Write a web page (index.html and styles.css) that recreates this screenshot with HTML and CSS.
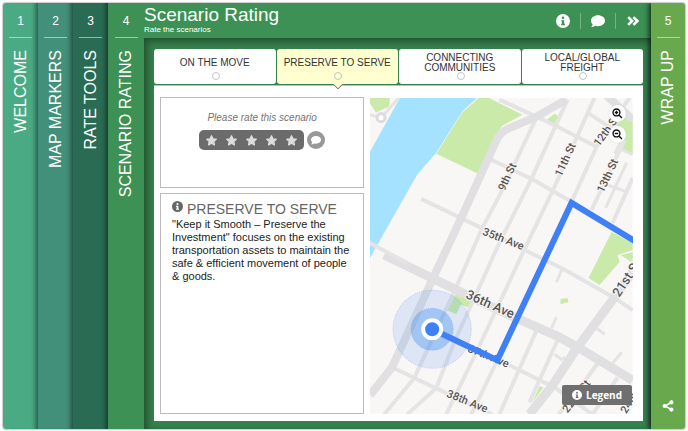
FILE: index.html
```
<!DOCTYPE html>
<html lang="en">
<head>
    <meta charset="UTF-8">
    <meta name="viewport" content="width=device-width, initial-scale=1.0">
    <title>Scenario Rating</title>
    <link rel="stylesheet" href="styles.css">
</head>
<body>
    <!-- shared icons -->
    <svg class="sprite" aria-hidden="true">
        <symbol id="icon-info" viewBox="0 0 16 16">
            <path fill-rule="evenodd" d="M8 0a8 8 0 1 0 0 16A8 8 0 0 0 8 0zM8 2.8a1.5 1.5 0 1 1 0 3 1.5 1.5 0 0 1 0-3zM6 7h3.3v4.2h.9v1.6H5.9v-1.6h.9V8.600H6z"/>
        </symbol>
        <symbol id="icon-comment" viewBox="0 0 16 16">
            <path d="M8 1.500c4.400 0 8 2.700 8 6.200s-3.600 6.200-8 6.200c-1.100 0-2.200-.2-3.200-.5C3.600 14.200 2 14.900.2 14.900c.9-.9 1.500-2 1.700-3.200C.7 10.600 0 9.200 0 7.700c0-3.500 3.600-6.200 8-6.200z"/>
        </symbol>
        <symbol id="icon-star" viewBox="0 0 16 16">
            <path stroke-width="2" stroke-linejoin="round" stroke="currentColor" d="M8 1.200l2 4.400 4.800.6-3.500 3.300.9 4.800L8 12l-4.200 2.300.9-4.800L1.200 6.200 6 5.600z"/>
        </symbol>
    </svg>

    <div class="app">
        <nav class="steps">
            <button class="step step-welcome"><span class="step-number">1</span><span class="step-name">WELCOME</span></button>
            <button class="step step-markers"><span class="step-number">2</span><span class="step-name">MAP MARKERS</span></button>
            <button class="step step-tools"><span class="step-number">3</span><span class="step-name">RATE TOOLS</span></button>
            <button class="step step-rating"><span class="step-number">4</span><span class="step-name">SCENARIO RATING</span></button>
        </nav>

        <main class="screen">
            <header class="header">
                <div>
                    <h1>Scenario Rating</h1>
                    <p>Rate the scenarios</p>
                </div>
                <div class="header-actions">
                    <button aria-label="Information"><svg class="icon-md"><use href="#icon-info"/></svg></button>
                    <button aria-label="Comment"><svg class="icon-md"><use href="#icon-comment"/></svg></button>
                    <button aria-label="Next">
                        <svg class="icon-md" viewBox="0 0 16 16"><path class="chevrons" d="M2.500 3.500L7 8l-4.500 4.500M8.500 3.500L13 8l-4.500 4.500"/></svg>
                    </button>
                </div>
            </header>

            <div class="content">
                <div class="tabs">
                    <button class="tab">ON THE MOVE</button>
                    <button class="tab active">PRESERVE TO SERVE</button>
                    <button class="tab">CONNECTING COMMUNITIES</button>
                    <button class="tab">LOCAL/GLOBAL FREIGHT</button>
                </div>

                <div class="panel">
                    <div class="info-column">
                        <section class="card rate-card">
                            <p>Please rate this scenario</p>
                            <div class="rate-row">
                                <div class="stars">
                                    <button aria-label="1 star"><svg><use href="#icon-star"/></svg></button>
                                    <button aria-label="2 stars"><svg><use href="#icon-star"/></svg></button>
                                    <button aria-label="3 stars"><svg><use href="#icon-star"/></svg></button>
                                    <button aria-label="4 stars"><svg><use href="#icon-star"/></svg></button>
                                    <button aria-label="5 stars"><svg><use href="#icon-star"/></svg></button>
                                </div>
                                <button class="comment-button" aria-label="Add a comment"><svg><use href="#icon-comment"/></svg></button>
                            </div>
                        </section>
                        <section class="card about-card">
                            <h2><svg><use href="#icon-info"/></svg>PRESERVE TO SERVE</h2>
                            <p>"Keep it Smooth – Preserve the Investment" focuses on the existing transportation assets to maintain the safe &amp; efficient movement of people &amp; goods.</p>
                        </section>
                    </div>

                    <div class="map">
                        <svg class="map-canvas" viewBox="0 0 262 316" preserveAspectRatio="xMidYMid slice">
                            <rect class="land" width="262" height="316"/>
                            <path class="water" d="M0 54L30 0H107L92 14L66 55L47 77L0 160z"/>
                            <g class="park">
                                <path d="M0 0H20L19 9L6 15L0 6z"/>
                                <path d="M109 0H118L152 17L132 28L125 38L108 76L66 56L92 15z"/>
                                <path d="M174 24L184 16L189 19L185 27z"/>
                                <path d="M244 24L254 18L262 22V57L251 52z"/>
                                <path d="M241 134L262 145V152L247 157L249 164L229 187L218 180z"/>
                                <path d="M250 157L262 154V165z"/>
                                <path d="M190 201L197 200L198 204L190 206z"/>
                                <path d="M169 288L173 289L162 304z"/>
                                <path d="M87 193L101 202L99 210L91 206L86 216L77 212z"/>
                            </g>
                            <g class="road">
                                <path d="M129 2L166 19L189 30L226 49"/>
                                <path d="M121 62L161 81L201 104L262 143"/>
                                <path d="M51 101L111 130L154 152L191 170L244 200L262 212"/>
                                <path d="M62 231L127 262L139 267L184 289L222 316"/>
                                <path d="M24 270L66 290L122 316"/>
                                <path d="M166 20L129 98L112 130L86 189L44 280L14 316"/>
                                <path d="M197 2L161 81L129 145L84 244L66 290L37 316"/>
                                <path d="M224 0L184 89L149 162L107 252L76 316"/>
                                <path d="M226 49L201 104L127 262L101 316"/>
                                <path d="M259 0L244 22L226 49"/>
                                <path d="M254 42L221 112"/>
                                <path d="M262 80L242 125"/>
                                <path d="M217 15L246 34"/>
                                <path d="M167 230L129 316"/>
                                <path d="M187 242L159 304"/>
                                <path d="M227 265L202 300L188 316"/>
                                <path d="M247 279L222 316"/>
                            </g>
                            <g class="lane">
                                <path d="M256 65L235 110M237 87L256 94"/>
                                <path d="M251 52L262 57M251 42L244 56"/>
                                <path d="M192 170L186 184M186 219L181 230"/>
                                <path d="M226 230L234 236M251 254L242 265"/>
                                <path d="M203 247L196 262L192 259M184 256L192 262"/>
                            </g>
                            <g class="avenue">
                                <path d="M196 2L166 19L138 31Q131 34 127 41L91 120L62 182L22 269L0 297"/>
                                <path d="M236 -2L262 22"/>
                            </g>
                            <g class="avenue wide">
                                <path d="M14 157L62 180L101 199L146 220L189 239L207 249L262 282"/>
                                <path d="M262 174L244 199L207 249L182 287L159 316"/>
                            </g>
                            <path class="road" d="M-2 144L37 165"/>
                            <path class="lane" d="M0 17L11 20L29 0"/>
                            <circle class="roundabout" cx="11" cy="20" r="4"/>

                            <g class="label">
                                <text transform="translate(137 79) rotate(-65)">9th St</text>
                                <text transform="translate(195 62) rotate(-65)">11th St</text>
                                <text transform="translate(236 33) rotate(-54)">12th St</text>
                                <text transform="translate(237 78) rotate(-65)">13th St</text>
                                <text transform="translate(133 141) rotate(21)">35th Ave</text>
                                <text transform="translate(118 258) rotate(22)">37th Ave</text>
                                <text transform="translate(97 303) rotate(22)">38th Ave</text>
                                <text transform="translate(206 298) rotate(-52)">22nd St</text>
                                <text transform="translate(262 299) rotate(-58)">24th St</text>
                            </g>
                            <g class="label large">
                                <text transform="translate(120 206) rotate(24)">36th Ave</text>
                                <text transform="translate(256 180) rotate(-57)">21st St</text>
                            </g>

                            <circle class="range" cx="62" cy="231" r="39"/>
                            <circle class="range inner" cx="62" cy="231" r="21"/>
                            <path class="route" d="M62 231L127 262L201 105L264 143"/>
                            <circle class="pin" cx="62" cy="231" r="9"/>
                        </svg>
                        <div class="zoom">
                            <button aria-label="Zoom in"><svg viewBox="0 0 16 16"><circle cx="6.500" cy="6.500" r="5"/><path d="M10.500 10.500l4 4M4 6.500h5M6.500 4v5"/></svg></button>
                            <button aria-label="Zoom out"><svg viewBox="0 0 16 16"><circle cx="6.500" cy="6.500" r="5"/><path d="M10.500 10.500l4 4M4 6.500h5"/></svg></button>
                        </div>
                        <button class="legend"><svg><use href="#icon-info"/></svg>Legend</button>
                    </div>
                </div>
            </div>
        </main>

        <nav class="steps steps-end">
            <button class="step step-wrap"><span class="step-number">5</span><span class="step-name">WRAP UP</span></button>
            <button class="share" aria-label="Share">
                <svg viewBox="0 0 16 16"><path d="M12 3.500L4 8l8 4.500"/><circle cx="12.500" cy="3.200" r="2.800"/><circle cx="3.500" cy="8" r="2.800"/><circle cx="12.500" cy="12.800" r="2.800"/></svg>
            </button>
        </nav>
    </div>
</body>
</html>
```
FILE: styles.css
```
* {
    box-sizing: border-box;
}

body {
    margin: 0;
    padding: 3px 3px 2px;
    min-height: 100vh;
    display: flex;
    background-color: #fff;
    font-family: Arial, "Liberation Sans", sans-serif;
}

button {
    margin: 0;
    padding: 0;
    border: none;
    background: none;
    color: inherit;
    font: inherit;
    cursor: pointer;
}

h1, h2, p {
    margin: 0;
    font-weight: normal;
}

svg {
    display: block;
    fill: currentColor;
}

.sprite {
    position: absolute;
    width: 0;
    height: 0;
}

.app {
    flex: 1;
    display: flex;
    border-radius: 3px;
    overflow: hidden;
    box-shadow: 0 0 1px 1px #ccc;
}

/* Side steps */
.steps {
    display: flex;
    color: #fff;
}

.step {
    width: 35px;
    padding-top: 9px;
    display: flex;
    flex-direction: column;
    align-items: center;
    box-shadow: inset -6px 0 5px -4px rgba(0, 0, 0, 0.5);
}

.step-number {
    width: 23px;
    height: 26px;
    border-bottom: 1px solid rgba(255, 255, 255, 0.5);
    font-size: 12px;
    line-height: 18px;
}

.step-name {
    margin-top: 12px;
    writing-mode: vertical-rl;
    transform: rotate(180deg);
    font-size: 16px;
    line-height: 18px;
    white-space: nowrap;
}

.step-welcome {
    background-color: #4aaa84;
}

.step-markers {
    background-color: #429079;
}

.step-tools {
    background-color: #2a6c53;
}

.step-rating {
    width: 36px;
    background-color: #3d9154;
    box-shadow: none;
}

.steps-end {
    position: relative;
    flex-direction: column;
    background-color: #69a94e;
    box-shadow: -2px 0 5px rgba(0, 0, 0, 0.7);
}

.step-wrap {
    width: 34px;
    flex: 1;
    box-shadow: none;
}

.share {
    align-self: center;
    padding-bottom: 17px;
}

.share svg {
    width: 12px;
    height: 12px;
}

.share path {
    fill: none;
    stroke: currentColor;
    stroke-width: 2;
}

/* Main screen */
.screen {
    flex: 1;
    min-width: 0;
    display: flex;
    flex-direction: column;
    background-color: #35804c;
}

.header {
    height: 35px;
    padding-right: 11px;
    display: flex;
    justify-content: space-between;
    background-color: #3d9154;
    color: #fff;
}

.header h1 {
    padding-top: 2px;
    font-size: 19px;
    line-height: 20px;
}

.header p {
    font-size: 8px;
    line-height: 10px;
}

.header-actions {
    display: flex;
    align-items: center;
}

.header-actions button {
    height: 16px;
    padding: 0 10px;
}

.header-actions button + button {
    border-left: 1px solid rgba(255, 255, 255, 0.3);
}

.header-actions button:last-child {
    padding-right: 0;
}

.icon-md {
    width: 14px;
    height: 14px;
}

.chevrons {
    fill: none;
    stroke: currentColor;
    stroke-width: 3;
}

.content {
    flex: 1;
    padding: 11px 8px 8px 10px;
    display: flex;
    flex-direction: column;
    box-shadow: inset 3px 3px 7px rgba(0, 0, 0, 0.4);
}

.tabs {
    display: grid;
    grid-template-columns: repeat(4, 1fr);
    gap: 1px;
    margin-bottom: 1px;
}

.tab {
    position: relative;
    height: 35px;
    padding: 0 12px 8px;
    border-radius: 3px;
    background-color: #fff;
    color: #333;
    font-size: 10px;
    line-height: 10px;
}

.tab::before {
    content: "";
    position: absolute;
    left: calc(50% - 3px);
    bottom: 4px;
    width: 6px;
    height: 6px;
    border: 1px solid #c4c4c4;
    border-radius: 50%;
}

.tab.active {
    padding: 0 0 8px;
    background-color: #ffffcf;
}

.tab.active::after {
    content: "";
    position: absolute;
    left: calc(50% - 3px);
    bottom: -4px;
    width: 7px;
    height: 7px;
    border: solid #777;
    border-width: 0 1px 1px 0;
    background-color: #ffffcf;
    clip-path: polygon(100% 0, 100% 100%, 0 100%);
    transform: rotate(45deg);
}

.panel {
    flex: 1;
    padding: 11px 10px 7px 6px;
    display: flex;
    gap: 6px;
    border-top: 1px solid #a9cdb3;
    background-color: #fff;
}

.info-column {
    flex: 7;
    display: flex;
    flex-direction: column;
    gap: 5px;
}

.card {
    border: 1px solid #bbb;
}

.rate-card {
    height: 91px;
    padding-top: 14px;
    color: #757575;
    text-align: center;
    font-size: 10px;
    font-style: italic;
    line-height: 12px;
}

.rate-row {
    margin-top: 6px;
    display: flex;
    justify-content: center;
    align-items: center;
    gap: 3px;
}

.stars {
    height: 20px;
    padding: 0 7px;
    display: flex;
    align-items: center;
    gap: 9px;
    border-radius: 5px;
    background-color: #6b6b6b;
    color: #dcdcdc;
}

.stars svg {
    width: 11px;
    height: 11px;
}

.comment-button {
    width: 18px;
    height: 18px;
    padding: 4px;
    border-radius: 50%;
    background-color: #999;
    color: #fff;
}

.comment-button svg {
    width: 10px;
    height: 10px;
}

.about-card {
    flex: 1;
    padding: 6px 8px 6px 11px;
}

.about-card h2 {
    display: flex;
    gap: 4px;
    color: #666;
    font-size: 14px;
    line-height: 18px;
}

.about-card h2 svg {
    margin-top: 1px;
    width: 11px;
    height: 11px;
}

.about-card p {
    color: #222;
    font-size: 11px;
    line-height: 13px;
}

/* Map */
.map {
    position: relative;
    flex: 9;
    min-width: 0;
    margin-top: 1px;
    overflow: hidden;
}

.map-canvas {
    position: absolute;
    width: 100%;
    height: 100%;
}

.land {
    fill: #f9f6f6;
}

.water {
    fill: #a5e2ff;
}

.park {
    fill: #c9eaa9;
}

.road,
.lane,
.avenue {
    fill: none;
    stroke: #e4e4e5;
    stroke-width: 4;
    stroke-linejoin: round;
}

.lane {
    stroke-width: 3;
}

.avenue {
    stroke: #e0e0e2;
    stroke-width: 8;
}

.avenue.wide {
    stroke-width: 9;
}

.roundabout {
    fill: #fff;
    stroke: #dcdce0;
    stroke-width: 3;
}

.label {
    fill: #555;
    stroke: #f9f6f6;
    stroke-width: 2;
    paint-order: stroke;
    font-family: Roboto, "Noto Sans", sans-serif;
    font-size: 11px;
    font-weight: 500;
    text-anchor: middle;
    dominant-baseline: central;
}

.label.large {
    font-size: 13px;
}

.range {
    fill: rgba(66, 133, 244, 0.14);
    stroke: rgba(66, 133, 244, 0.3);
    stroke-dasharray: 1 1;
}

.range.inner {
    fill: rgba(66, 145, 240, 0.38);
}

.route {
    fill: none;
    stroke: #3f80f6;
    stroke-width: 6;
}

.pin {
    fill: #3f80f6;
    stroke: #fff;
    stroke-width: 4;
}

.zoom {
    position: absolute;
    top: 7px;
    right: 7px;
    display: grid;
    gap: 4px;
}

.zoom button {
    width: 17px;
    height: 17px;
    padding: 3px;
    border-radius: 50%;
    background-color: #fff;
    color: #111;
    box-shadow: 0 0 1px #bbb;
}

.zoom svg {
    width: 11px;
    height: 11px;
    fill: none;
    stroke: currentColor;
    stroke-width: 2;
}

.legend {
    position: absolute;
    right: 1px;
    bottom: 9px;
    height: 20px;
    padding: 0 10px;
    display: flex;
    align-items: center;
    gap: 4px;
    border-radius: 2px;
    background-color: #6f6f6f;
    color: #fff;
    font-family: "Open Sans", sans-serif;
    font-size: 10px;
    font-weight: bold;
}

.legend svg {
    width: 10px;
    height: 10px;
}
```
